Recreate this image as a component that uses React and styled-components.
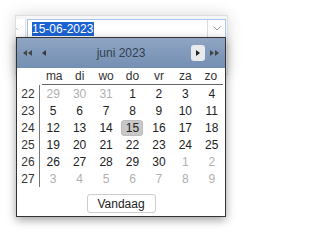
import React from "react";
import styled, { createGlobalStyle } from "styled-components";

const GlobalStyle = createGlobalStyle`
  html, body {
    margin: 0;
    padding: 0;
    background: #fff;
  }
  body {
    font-family: "Liberation Sans", Arial, sans-serif;
    font-size: 12px;
    color: #222;
  }
`;

const Stage = styled.div`
  width: 243px;
  height: 235px;
  padding: 15px 0 0 15px;
  box-sizing: border-box;
  overflow: hidden;
`;

/* window around the field */
const Panel = styled.div`
  position: relative;
  width: 213px;
  height: 60px;
  box-sizing: border-box;
  border: 1px solid #dedede;
  background: #f6f6f6;
  box-shadow: 0 0 14px rgba(0, 0, 0, 0.16);
  padding: 3px 0 0 0;
  display: flex;
  align-items: flex-start;
  gap: 1px;
`;

const Stub = styled.div`
  width: 9px;
  height: 19px;
  background: #fff;
  border-right: 1px solid #e2e2e2;
  display: flex;
  align-items: center;
`;

const Field = styled.div`
  width: 199px;
  height: 19px;
  box-sizing: border-box;
  border: 1px solid #a9c6ea;
  background: #fff;
  display: flex;
  align-items: center;
`;

const FieldText = styled.div`
  flex: 1;
  padding-left: 4px;
  display: flex;
  align-items: center;
`;

const Selection = styled.span`
  background: #1c62d2;
  color: #fff;
  font-size: 12px;
  line-height: 14px;
  padding: 0 1px 0 0;
`;

const Toggle = styled.div`
  width: 17px;
  height: 100%;
  border-left: 1px solid #dcdcdc;
  display: flex;
  align-items: center;
  justify-content: center;
`;

/* the popup */
const Popup = styled.div`
  position: absolute;
  left: 0;
  top: 21px;
  width: 210px;
  box-sizing: border-box;
  border: 1px solid #333;
  background: #fff;
  box-shadow: 0 3px 9px rgba(0, 0, 0, 0.38);
`;

const Header = styled.div`
  height: 30px;
  display: grid;
  grid-template-columns: 1fr auto 1fr;
  align-items: center;
  padding: 0 6px;
  background: linear-gradient(#8fa5c3, #748fb3);
`;

const NavGroup = styled.div`
  display: flex;
  align-items: center;
  gap: ${(p) => p.$gap || 10}px;
  justify-content: ${(p) => (p.$end ? "flex-end" : "flex-start")};
`;

const Title = styled.div`
  font-size: 12px;
  color: #33404f;
`;

const NavBox = styled.div`
  width: 14px;
  height: 16px;
  border-radius: 3px;
  background: #e8eaee;
  display: flex;
  align-items: center;
  justify-content: center;
`;

const Grid = styled.div`
  display: grid;
  grid-template-columns: 23px repeat(7, 1fr);
`;

const NameCell = styled.div`
  height: 16px;
  display: flex;
  align-items: center;
  justify-content: center;
  color: #333;
  border-bottom: 1px solid ${(p) => (p.$blank ? "transparent" : "#666")};
  margin: ${(p) => (p.$first ? "0 0 0 2px" : p.$last ? "0 2px 0 0" : "0")};
`;

const WeekCell = styled.div`
  height: 17px;
  display: flex;
  align-items: center;
  justify-content: center;
  color: #333;
  border-right: 1px solid #777;
`;

const DayCell = styled.div`
  height: 17px;
  display: flex;
  align-items: center;
  justify-content: center;
  color: ${(p) => (p.$muted ? "#b0b0b0" : "#222")};
`;

const DayMark = styled.span`
  width: 22px;
  height: 16px;
  box-sizing: border-box;
  display: flex;
  align-items: center;
  justify-content: center;
  border-radius: 3px;
  background: ${(p) => (p.$selected ? "#c8c8c8" : "transparent")};
  border: 1px solid ${(p) => (p.$selected ? "#bcbcbc" : "transparent")};
`;

const Footer = styled.div`
  display: flex;
  justify-content: center;
  padding: 7px 0 3px;
`;

const TodayButton = styled.button`
  width: 69px;
  height: 19px;
  border: 1px solid #cdcdcd;
  border-radius: 3px;
  background: #fff;
  font-family: "Liberation Sans", Arial, sans-serif;
  font-size: 12px;
  color: #222;
  padding: 0;
`;

const Tri = ({ dir = "left", color = "#3a3a3a" }) => (
  <svg width="4" height="6" viewBox="0 0 4 6">
    <polygon
      points={dir === "left" ? "4,0 4,6 0,3" : "0,0 0,6 4,3"}
      fill={color}
    />
  </svg>
);

const DoubleTri = ({ dir }) => (
  <NavGroup $gap={1}>
    <Tri dir={dir} color="#444" />
    <Tri dir={dir} color="#444" />
  </NavGroup>
);

const Chevron = ({ color = "#9a9a9a" }) => (
  <svg width="8" height="5" viewBox="0 0 8 5">
    <polyline points="0.5,0.5 4,4 7.5,0.5" fill="none" stroke={color} strokeWidth="1" />
  </svg>
);

const dayNames = ["ma", "di", "wo", "do", "vr", "za", "zo"];

const weeks = [
  { nr: 22, days: [[29, 1], [30, 1], [31, 1], [1], [2], [3], [4]] },
  { nr: 23, days: [[5], [6], [7], [8], [9], [10], [11]] },
  { nr: 24, days: [[12], [13], [14], [15], [16], [17], [18]] },
  { nr: 25, days: [[19], [20], [21], [22], [23], [24], [25]] },
  { nr: 26, days: [[26], [27], [28], [29], [30], [1, 1], [2, 1]] },
  { nr: 27, days: [[3, 1], [4, 1], [5, 1], [6, 1], [7, 1], [8, 1], [9, 1]] },
];

const App = () => {
  return (
    <Stage>
      <GlobalStyle />
      <Panel>
        <Stub>
          <svg width="4" height="4" viewBox="0 0 4 4">
            <polyline points="0,1 2,3" stroke="#bbb" strokeWidth="1" fill="none" />
          </svg>
        </Stub>
        <Field>
          <FieldText>
            <Selection>15-06-2023</Selection>
          </FieldText>
          <Toggle>
            <Chevron />
          </Toggle>
        </Field>

        <Popup>
          <Header>
            <NavGroup>
              <DoubleTri dir="left" />
              <Tri dir="left" />
            </NavGroup>
            <Title>juni 2023</Title>
            <NavGroup $end $gap={5}>
              <NavBox>
                <Tri dir="right" color="#222" />
              </NavBox>
              <DoubleTri dir="right" />
            </NavGroup>
          </Header>

          <Grid>
            <NameCell $blank />
            {dayNames.map((d, i) => (
              <NameCell key={d} $first={i === 0} $last={i === 6}>
                {d}
              </NameCell>
            ))}
            {weeks.map((w) => (
              <React.Fragment key={w.nr}>
                <WeekCell>{w.nr}</WeekCell>
                {w.days.map(([n, muted], i) => (
                  <DayCell key={i} $muted={!!muted}>
                    <DayMark $selected={!muted && n === 15}>{n}</DayMark>
                  </DayCell>
                ))}
              </React.Fragment>
            ))}
          </Grid>

          <Footer>
            <TodayButton>Vandaag</TodayButton>
          </Footer>
        </Popup>
      </Panel>
    </Stage>
  );
};

export default App;
